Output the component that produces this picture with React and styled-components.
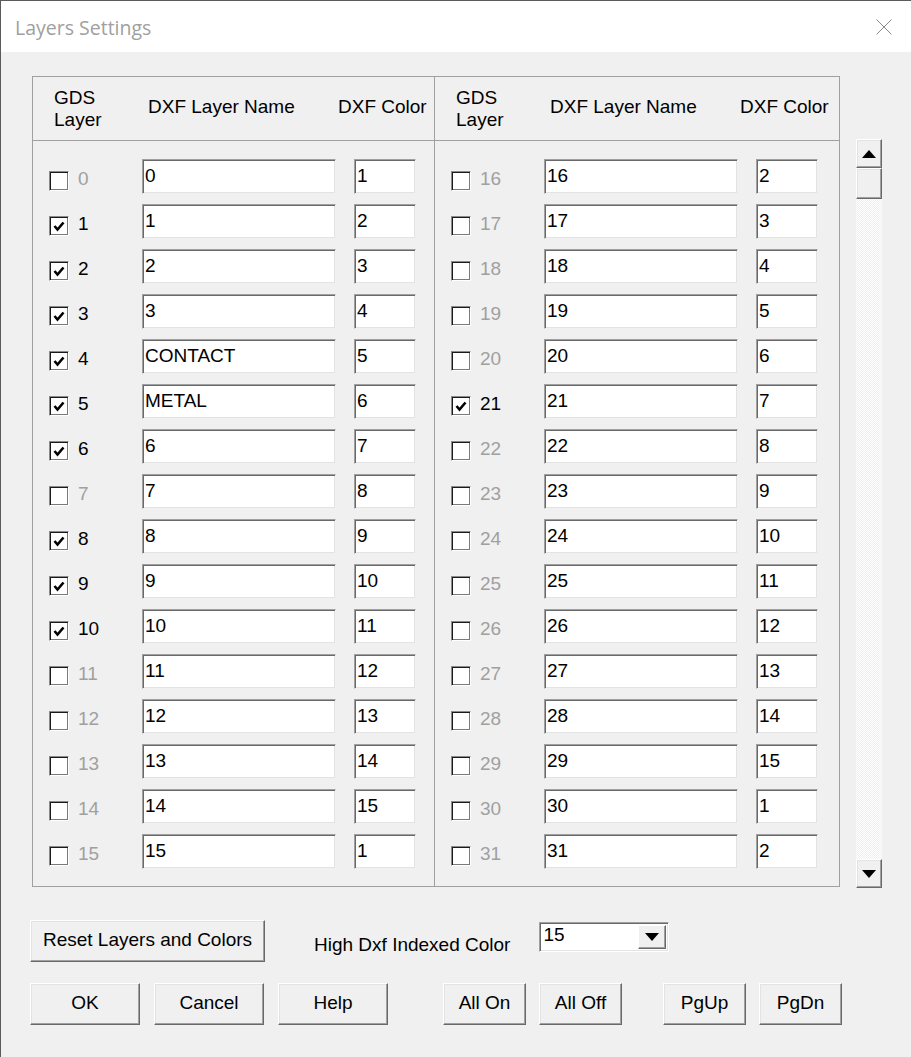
import React from 'react';
import styled, { createGlobalStyle } from 'styled-components';

const Global = createGlobalStyle`
  html, body { margin: 0; padding: 0; background: #f0f0f0; }
  body { font-family: "Liberation Sans", Arial, sans-serif; color: #000; }
  * { box-sizing: border-box; }
`;

const Window = styled.div`
  width: 911px;
  height: 1057px;
  border-left: 1px solid #5b5b5b;
  border-top: 1px solid #5b5b5b;
  background: #f0f0f0;
  display: flex;
  flex-direction: column;
  overflow: hidden;
`;

const TitleBar = styled.div`
  height: 51px;
  flex: none;
  background: #fff;
  display: flex;
  align-items: center;
  justify-content: space-between;
  padding: 0 19px 0 14px;
`;

const Title = styled.div`
  font-family: "Open Sans", "Noto Sans", sans-serif;
  font-size: 19.5px;
  color: #a0a0a0;
  padding-top: 2px;
`;

const CloseBtn = styled.div`
  width: 16px;
  height: 16px;
  display: flex;
`;

const Body = styled.div`
  flex: 1;
  display: flex;
  flex-direction: column;
  padding-top: 24px;
`;

const MainRow = styled.div`
  display: flex;
  padding-left: 31px;
  gap: 16px;
`;

const Frame = styled.div`
  width: 808px;
  height: 811px;
  border: 1px solid #a0a0a0;
  display: flex;
`;

const Half = styled.div`
  display: flex;
  flex-direction: column;
  width: ${(p) => (p.$right ? '405px' : '401px')};
  border-left: ${(p) => (p.$right ? '1px solid #a0a0a0' : 'none')};
`;

const HeaderRow = styled.div`
  height: 64px;
  border-bottom: 1px solid #a0a0a0;
  display: flex;
  align-items: center;
  padding-left: 21px;
  font-size: 19px;
  line-height: 22px;
`;

const HeadGds = styled.div`
  width: 94px;
`;

const HeadName = styled.div`
  width: 190px;
  padding-bottom: 4px;
`;

const HeadColor = styled.div`
  white-space: nowrap;
  padding-bottom: 4px;
`;

const Rows = styled.div`
  display: flex;
  flex-direction: column;
  gap: 10px;
  padding-top: 18px;
`;

const Row = styled.div`
  display: flex;
  align-items: flex-start;
  height: 35px;
  padding-left: 16px;
`;

const CheckCell = styled.div`
  width: 93px;
  display: flex;
  align-items: flex-start;
  margin-top: 12px;
`;

const Box = styled.div`
  width: 20px;
  height: 20px;
  flex: none;
  background: #fff;
  border: 1px solid;
  border-color: #8a8a8a #fff #fff #8a8a8a;
  box-shadow: inset 1px 1px 0 #1a1a1a, inset -1px -1px 0 #7a7a7a;
  display: flex;
  align-items: center;
  justify-content: center;
`;

const LayerNum = styled.span`
  margin-left: 9px;
  font-size: 19px;
  line-height: 16px;
  color: ${(p) => (p.$on ? '#000' : '#a0a0a0')};
`;

const Field = styled.input`
  width: ${(p) => p.$w}px;
  height: 35px;
  margin-left: ${(p) => p.$ml || 0}px;
  flex: none;
  border: 1px solid;
  border-color: #a0a0a0 #f0f0f0 #f0f0f0 #a0a0a0;
  box-shadow: inset 1px 1px 0 #696969, inset -1px -1px 0 #e3e3e3;
  background: #fff;
  font-family: "Liberation Sans", Arial, sans-serif;
  font-size: 19px;
  line-height: 22px;
  padding: 4px 2px 5px 2px;
  color: #000;
  outline: none;
  border-radius: 0;
`;

const ScrollBar = styled.div`
  width: 26px;
  margin-top: 63px;
  height: 749px;
  display: flex;
  flex-direction: column;
`;

const RaisedBtn = styled.div`
  height: ${(p) => p.$h}px;
  flex: none;
  background: #f0f0f0;
  border: 1px solid;
  border-color: #fff #696969 #696969 #fff;
  box-shadow: inset -1px -1px 0 #a0a0a0, inset 1px 1px 0 #e3e3e3;
  display: flex;
  align-items: center;
  justify-content: center;
`;

const Track = styled.div`
  flex: 1;
  background-color: #f0f0f0;
  background-image: repeating-conic-gradient(#ffffff 0% 25%, #f0f0f0 0% 50%);
  background-size: 2px 2px;
`;

const ResetRow = styled.div`
  display: flex;
  align-items: center;
  padding-left: 29px;
  margin-top: 32px;
`;

const Button = styled.button`
  width: ${(p) => p.$w}px;
  height: 42px;
  margin-left: ${(p) => p.$ml || 0}px;
  flex: none;
  background: #f0f0f0;
  border: 1px solid;
  border-color: #fff #696969 #696969 #fff;
  box-shadow: inset -1px -1px 0 #a0a0a0, inset 1px 1px 0 #e3e3e3;
  font-family: "Liberation Sans", Arial, sans-serif;
  font-size: 19px;
  color: #000;
  padding: 0 0 2px 0;
  border-radius: 0;
  cursor: default;
`;

const Caption = styled.span`
  margin-left: 49px;
  font-size: 19px;
  padding-top: 7px;
`;

const Combo = styled.div`
  width: 130px;
  height: 30px;
  margin-left: 29px;
  margin-top: -8px;
  border: 1px solid;
  border-color: #a0a0a0 #fff #fff #a0a0a0;
  box-shadow: inset 1px 1px 0 #696969, inset -1px -1px 0 #e3e3e3;
  background: #fff;
  display: flex;
  padding: 2px;
`;

const ComboText = styled.div`
  flex: 1;
  font-size: 19px;
  line-height: 20px;
  padding-left: 1px;
`;

const ComboArrow = styled.div`
  width: 28px;
  background: #f0f0f0;
  border: 1px solid;
  border-color: #fff #696969 #696969 #fff;
  box-shadow: inset -1px -1px 0 #a0a0a0;
  display: flex;
  align-items: center;
  justify-content: center;
`;

const ButtonRow = styled.div`
  display: flex;
  padding-left: 29px;
  margin-top: 21px;
`;

const UpArrow = () => (
  <svg width="14" height="8" viewBox="0 0 14 8">
    <polygon points="7,0 14,8 0,8" fill="#000" />
  </svg>
);

const DownArrow = () => (
  <svg width="14" height="8" viewBox="0 0 14 8">
    <polygon points="0,0 14,0 7,8" fill="#000" />
  </svg>
);

const Check = () => (
  <svg width="12" height="11" viewBox="0 0 12 11">
    <polyline points="1.5,5 4.5,8.5 10.5,1.5" fill="none" stroke="#000" strokeWidth="2.6" />
  </svg>
);

const leftChecked = new Set([1, 2, 3, 4, 5, 6, 8, 9, 10]);
const rightChecked = new Set([21]);
const names = { 4: 'CONTACT', 5: 'METAL' };

function Column({ start, checked, right }) {
  const rows = Array.from({ length: 16 }, (_, i) => start + i);
  return (
    <Half $right={right}>
      <HeaderRow>
        <HeadGds>
          GDS
          <br />
          Layer
        </HeadGds>
        <HeadName>DXF Layer Name</HeadName>
        <HeadColor>DXF Color</HeadColor>
      </HeaderRow>
      <Rows>
        {rows.map((n) => {
          const on = checked.has(n);
          return (
            <Row key={n}>
              <CheckCell>
                <Box>{on && <Check />}</Box>
                <LayerNum $on={on}>{n}</LayerNum>
              </CheckCell>
              <Field $w={194} readOnly defaultValue={names[n] || String(n)} />
              <Field $w={62} $ml={18} readOnly defaultValue={String((n % 15) + 1)} />
            </Row>
          );
        })}
      </Rows>
    </Half>
  );
}

export default function App() {
  return (
    <>
      <Global />
      <Window>
        <TitleBar>
          <Title>Layers Settings</Title>
          <CloseBtn>
            <svg width="16" height="16" viewBox="0 0 16 16">
              <line x1="0.5" y1="0.5" x2="15.5" y2="15.5" stroke="#8a8a8a" strokeWidth="1" />
              <line x1="15.5" y1="0.5" x2="0.5" y2="15.5" stroke="#8a8a8a" strokeWidth="1" />
            </svg>
          </CloseBtn>
        </TitleBar>
        <Body>
          <MainRow>
            <Frame>
              <Column start={0} checked={leftChecked} />
              <Column start={16} checked={rightChecked} right />
            </Frame>
            <ScrollBar>
              <RaisedBtn $h={29}>
                <UpArrow />
              </RaisedBtn>
              <RaisedBtn $h={31} />
              <Track />
              <RaisedBtn $h={29}>
                <DownArrow />
              </RaisedBtn>
            </ScrollBar>
          </MainRow>
          <ResetRow>
            <Button $w={235}>Reset Layers and Colors</Button>
            <Caption>High Dxf Indexed Color</Caption>
            <Combo>
              <ComboText>15</ComboText>
              <ComboArrow>
                <DownArrow />
              </ComboArrow>
            </Combo>
          </ResetRow>
          <ButtonRow>
            <Button $w={110}>OK</Button>
            <Button $w={110} $ml={14}>Cancel</Button>
            <Button $w={110} $ml={14}>Help</Button>
            <Button $w={83} $ml={55}>All On</Button>
            <Button $w={83} $ml={13}>All Off</Button>
            <Button $w={83} $ml={41}>PgUp</Button>
            <Button $w={83} $ml={13}>PgDn</Button>
          </ButtonRow>
        </Body>
      </Window>
    </>
  );
}
